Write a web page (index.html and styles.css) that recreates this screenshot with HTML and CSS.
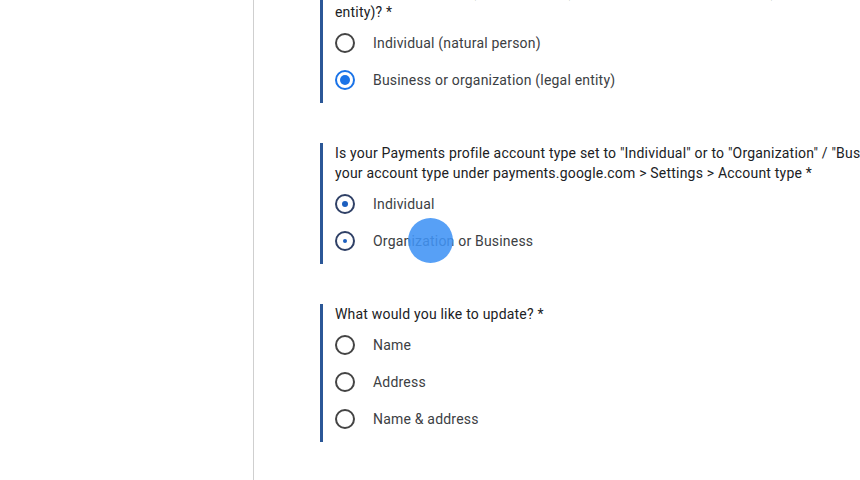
FILE: index.html
```html
<!DOCTYPE html>
<html lang="en">
<head>
    <meta charset="UTF-8">
    <title>Update payments profile</title>
    <link rel="stylesheet" href="styles.css">
</head>
<body>
    <div class="page">
        <div class="gutter"></div>
        <div class="main">
            <!-- Pregunta 1 (cortada arriba) -->
            <div class="question first">
                <div class="title">Are you an individual (natural person) or a business or organization (legal<br>entity)? *</div>
                <div class="option">
                    <span class="radio"></span>
                    <span class="label">Individual (natural person)</span>
                </div>
                <div class="option">
                    <span class="radio checked"></span>
                    <span class="label">Business or organization (legal entity)</span>
                </div>
            </div>

            <div class="question">
                <div class="title">Is your Payments profile account type set to "Individual" or to "Organization" / "Business"? You can check<br>your account type under payments.google.com &gt; Settings &gt; Account type *</div>
                <div class="option">
                    <span class="radio navy dot-md"></span>
                    <span class="label">Individual</span>
                </div>
                <div class="option">
                    <span class="radio navy dot-sm"></span>
                    <span class="label">Organization or Business</span>
                    <span class="cursor"></span>
                </div>
            </div>

            <div class="question">
                <div class="title">What would you like to update? *</div>
                <div class="option">
                    <span class="radio"></span>
                    <span class="label">Name</span>
                </div>
                <div class="option">
                    <span class="radio"></span>
                    <span class="label">Address</span>
                </div>
                <div class="option">
                    <span class="radio"></span>
                    <span class="label">Name &amp; address</span>
                </div>
            </div>
        </div>
    </div>
</body>
</html>
```

FILE: styles.css
```css
body {
    margin: 0;
    background: #fff;
    font-family: Roboto, "Liberation Sans", Arial, sans-serif;
    font-size: 14px;
    letter-spacing: 0.2px;
    color: #202124;
    overflow: hidden;
}
.page {
    display: flex;
    height: 480px;
}
.gutter {
    width: 253px;
    flex: none;
    border-right: 1px solid #cfcfcf;
}
.main {
    flex: 1;
    padding-left: 66px;
    min-width: 0;
    overflow: hidden;
}
.question {
    border-left: 3px solid #2b5797;
    padding: 0 0 5px 12px;
    margin-bottom: 40px;
    white-space: nowrap;
}
.question.first {
    margin-top: -18px;
}
.question:last-child {
    margin-bottom: 0;
}
.title {
    line-height: 20px;
    margin-bottom: 2px;
}
.option {
    position: relative;
    display: flex;
    align-items: center;
    height: 37px;
}
.radio {
    width: 16px;
    height: 16px;
    border: 2px solid #444;
    border-radius: 50%;
    flex: none;
    display: flex;
    align-items: center;
    justify-content: center;
    margin-right: 18px;
}
.radio.checked {
    border-color: #1a73e8;
}
.radio.checked::after {
    content: "";
    width: 10px;
    height: 10px;
    border-radius: 50%;
    background: #1a73e8;
}
.radio.navy {
    border-color: #2f4066;
}
.radio.navy::after {
    content: "";
    border-radius: 50%;
    background: #1c5fbf;
}
.radio.dot-md::after {
    width: 6px;
    height: 6px;
}
.radio.dot-sm::after {
    width: 4px;
    height: 4px;
}
.label {
    color: #3c4043;
    line-height: 20px;
}
.cursor {
    position: absolute;
    left: 73px;
    top: -4px;
    width: 45px;
    height: 45px;
    border-radius: 50%;
    background: rgba(64, 147, 245, 0.88);
}
```
